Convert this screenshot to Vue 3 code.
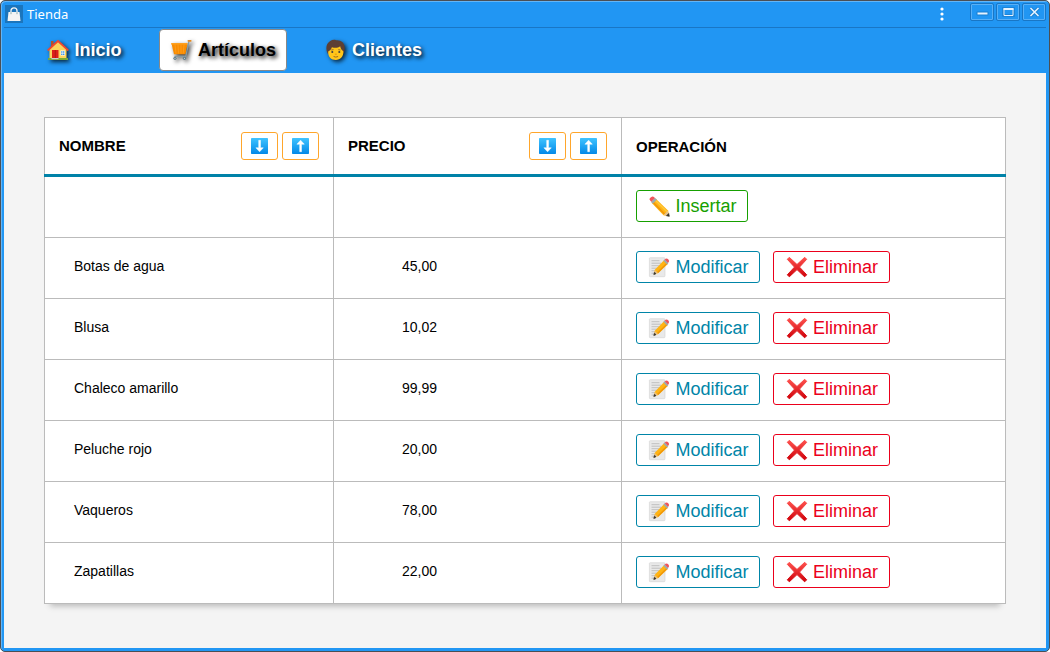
<script setup>
const articles = [
  { name: 'Botas de agua', price: '45,00' },
  { name: 'Blusa', price: '10,02' },
  { name: 'Chaleco amarillo', price: '99,99' },
  { name: 'Peluche rojo', price: '20,00' },
  { name: 'Vaqueros', price: '78,00' },
  { name: 'Zapatillas', price: '22,00' },
]
const columns = ['NOMBRE', 'PRECIO']
</script>

<template>
  <div class="desktop">
    <div class="window">
      <header class="titlebar">
        <span class="app-icon">
          <svg width="18" height="18" viewBox="0 0 18 18">
            <path d="M3.500 7h11l1 9h-13z" fill="#f4f4f4" />
            <path d="M6 9V5.800a3 3 0 0 1 6 0V9" fill="none" stroke="#f4f4f4" stroke-width="1.300" />
            <path d="M6 7.200v2M12 7.200v2" stroke="#8aa" stroke-width="1" />
          </svg>
        </span>
        <span class="title">Tienda</span>
        <svg class="dots" width="4" height="14" viewBox="0 0 4 14">
          <circle v-for="y in [2, 7, 12]" :key="y" cx="2" :cy="y" r="1.6" fill="#fff" />
        </svg>
        <div class="controls">
          <button>
            <svg width="13" height="10" viewBox="0 0 13 10"><rect x="0.500" y="4.500" width="12" height="4" rx="1" fill="#1b7fd0" /><rect x="1.500" y="5.500" width="10" height="2" fill="#e6f3ff" /></svg>
          </button>
          <button>
            <svg width="13" height="10" viewBox="0 0 13 10"><path d="M1.500 1.500h10v7h-10z" fill="none" stroke="#1b7fd0" stroke-width="2.600" /><path d="M2 1.500h9v7H2z" fill="none" stroke="#e6f3ff" /><path d="M1.500 2h10" stroke="#e6f3ff" stroke-width="2" /></svg>
          </button>
          <button>
            <svg width="13" height="10" viewBox="0 0 13 10"><path d="M2.500 1l8 8M10.500 1l-8 8" stroke="#1b7fd0" stroke-width="3.400" /><path d="M2.500 1l8 8M10.500 1l-8 8" stroke="#e6f3ff" stroke-width="1.600" /></svg>
          </button>
        </div>
      </header>

      <nav class="menu">
        <a class="item home">
          <svg width="22" height="22" viewBox="0 0 22 22">
            <path d="M4 2h2.500v5H4z" fill="#b5532a" />
            <path d="M2.500 10L11 2.500l8.500 7.500v10h-17z" fill="#fbd45d" />
            <path d="M1.200 11L11 2l9.800 9" fill="none" stroke="#f0482f" stroke-width="1.700" stroke-linecap="round" />
            <path d="M5 11h6.500v9H5z" fill="#dc1f1a" />
            <path d="M8.300 11v9" stroke="#9e1712" stroke-width=".7" />
            <path d="M13.500 11.500h4.500v5h-4.500z" fill="#fff" />
            <path d="M14.200 12.200h1.300v1.500h-1.300zM16.100 12.200h1.300v1.500h-1.300zM14.200 14.400h1.300v1.500h-1.300zM16.100 14.400h1.300v1.500h-1.300z" fill="#298be0" />
            <path d="M1 19h20v2H1z" fill="#78a936" />
            <path d="M4.500 19h7v1.200h-7z" fill="#c9cdd0" />
          </svg>
          <span>Inicio</span>
        </a>
        <a class="item active">
          <svg width="22" height="22" viewBox="0 0 22 22">
            <path d="M1.500 4.500h16l-2 10.800H4z" fill="#f98c00" />
            <path d="M1.200 4.800h16.300" stroke="#ffa01c" stroke-width="1.500" />
            <path d="M5 5.500l1 9M8 5.500l.5 9M11 5.500v9M14 5.500l-.8 9" stroke="#ffa62b" stroke-width=".6" />
            <path d="M19 2l-3.200 15.300H4.500" fill="none" stroke="#849aa4" stroke-width="1.300" />
            <path d="M18.400 1.800h2.300" stroke="#e88a1c" stroke-width="1.800" stroke-linecap="round" />
            <circle cx="5" cy="19.300" r="1.600" fill="#607d8b" /><circle cx="14.500" cy="19.300" r="1.600" fill="#607d8b" />
            <circle cx="5" cy="19.300" r=".6" fill="#cfd8dc" /><circle cx="14.500" cy="19.300" r=".6" fill="#cfd8dc" />
          </svg>
          <span>Artículos</span>
        </a>
        <a class="item people">
          <svg width="22" height="22" viewBox="0 0 22 22">
            <path d="M2.600 14.500C.4 10 1 4.500 5.200 2 7 .8 9.500.6 11 1.200c5-.6 8.900 2.800 8.700 7.800 0 2.200-.4 4-1.200 5.500z" fill="#5d3f34" />
            <path d="M3.200 12.500c1.600-.8 3-2.200 3.700-4.300 3.200 1.200 6.200.6 8.300-.9.300 2.200 1.500 3.900 3.100 5 .5 5-2.800 8.700-7.500 8.700s-8-3.500-7.600-8.500z" fill="#ffc61a" />
            <path d="M6.300 11l2.200-.3M13.300 10.700l2.200.3" stroke="#6d4c41" stroke-width=".8" />
            <circle cx="7.300" cy="13" r="1.050" fill="#404040" /><circle cx="14.300" cy="13" r="1.050" fill="#404040" />
            <path d="M9.800 15.200h2" stroke="#e59600" stroke-width="1" />
            <path d="M8.600 17.500q2.200 1.200 4.500 0" fill="none" stroke="#9a6a20" stroke-width="1" />
          </svg>
          <span>Clientes</span>
        </a>
      </nav>

      <main class="content">
        <div class="table">
          <div class="row head">
            <div v-for="c in columns" :key="c" class="cell heading" :class="c.toLowerCase()">
              <span>{{ c }}</span>
              <div class="sorts">
                <button v-for="dir in ['down', 'up']" :key="dir" class="sort">
                  <svg width="17" height="16" viewBox="0 0 17 16">
                    <defs>
                      <linearGradient :id="'sky-' + c + dir" x2="0" y2="1"><stop stop-color="#40c4ff" /><stop offset="1" stop-color="#0288e8" /></linearGradient>
                    </defs>
                    <rect width="17" height="16" rx=".7" :fill="`url(#sky-${c}${dir})`" />
                    <path v-if="dir === 'down'" d="M7.700 2.300h1.800v7.500h2.800L8.600 13.800 4.900 9.800h2.800z" fill="#fff" stroke="#fff" stroke-width=".5" stroke-linejoin="round" />
                    <path v-else d="M7.700 13.700h1.800V6.200h2.800L8.600 2.200 4.900 6.200h2.800z" fill="#fff" stroke="#fff" stroke-width=".5" stroke-linejoin="round" />
                  </svg>
                </button>
              </div>
            </div>
            <div class="cell heading operation"><span>OPERACIÓN</span></div>
          </div>

          <div class="row">
            <div class="cell nombre"></div>
            <div class="cell precio"></div>
            <div class="cell operation">
              <button class="action insert">
                <svg width="22" height="22" viewBox="0 0 22 22">
                  <path d="M7.600 3.600L20 15.600l1.200 5.600-5.700-1L3.500 7.800z" fill="#ffb414" />
                  <path d="M4.600 6.700L16.500 19" stroke="#f0960a" stroke-width="1.600" />
                  <path d="M6.800 4.700L19 16.700" stroke="#ffca3d" stroke-width="1.200" />
                  <path d="M1.600 4.700q-.4-1 .7-2t2.200-1.200q.8-.2 1.700.7l1 1-3.800 3.900z" fill="#f0555b" />
                  <path d="M7 2.900L3.100 7l1.700 1.700L8.900 4.600z" fill="#9baab0" />
                  <path d="M20 15.500l1.200 5.700-5.600-1.200z" fill="#e6c28c" />
                  <path d="M20.700 18.500l.6 2.800-2.800-.5z" fill="#333" stroke="#333" stroke-width=".7" />
                </svg>
                <span>Insertar</span>
              </button>
            </div>
          </div>

          <div v-for="a in articles" :key="a.name" class="row">
            <div class="cell nombre">{{ a.name }}</div>
            <div class="cell precio"><span>{{ a.price }}</span></div>
            <div class="cell operation">
              <button class="action modify">
                <svg width="22" height="22" viewBox="0 0 22 22">
                  <rect x="1.400" y="1.700" width="15.600" height="19" rx=".8" fill="#e9e9e9" stroke="#d2d2d2" stroke-width=".6" />
                  <path d="M3.500 4.700h8M3.500 7.200h9.500M3.500 9.700h8M3.500 12.200h6.500M3.500 14.700h4M3.500 17.200h3" stroke="#b4b4b4" stroke-width=".8" />
                  <path d="M16 4.200l3.800 3.700L10.300 17l-4.500 1.500 1-4.800z" fill="#ffb414" />
                  <path d="M18.800 7.600L9.600 16.600" stroke="#f0960a" stroke-width="1.400" />
                  <path d="M16.500 3.700l1.200-1q1.300-.7 2.500.5t.7 2.500l-1.100 1.500z" fill="#f0555b" />
                  <path d="M15.400 4.700l3.700 3.700 1.200-1.200-3.600-3.700z" fill="#9baab0" />
                  <path d="M7 14.200l-1.100 4.200 4-1.500z" fill="#e6c28c" />
                  <path d="M6.400 16.300l-.6 2.200 2.200-.8z" fill="#333" stroke="#333" stroke-width=".7" />
                </svg>
                <span>Modificar</span>
              </button>
              <button class="action remove">
                <svg width="22" height="22" viewBox="0 0 22 22">
                  <defs><linearGradient id="cross-red" gradientUnits="userSpaceOnUse" x1="0" y1="1" x2="0" y2="21"><stop stop-color="#ff5450" /><stop offset="1" stop-color="#cf0009" /></linearGradient></defs>
                  <path d="M3.300 1.300L11 8.500l7.700-7.200 2 2-7.200 7.800 7.200 7.700-2 2-7.700-7.200-7.700 7.200-2-2 7.200-7.700-7.200-7.800z" fill="url(#cross-red)" stroke="url(#cross-red)" stroke-width="1" stroke-linejoin="round" />
                </svg>
                <span>Eliminar</span>
              </button>
            </div>
          </div>
        </div>
      </main>
    </div>
  </div>
</template>

<style scoped>
* { box-sizing: border-box; }
button { margin: 0; padding: 0; background: transparent; font-family: inherit; }
svg { display: block; flex: none; }
.desktop {
  width: 1050px;
  height: 652px;
  background: #fff;
  font-family: "Liberation Sans", Arial, sans-serif;
}
.window {
  width: 1050px;
  height: 652px;
  border: 1px solid #4b4f54;
  border-radius: 5px;
  background: #2196f3;
  box-shadow: inset 1px 1px #64b5f6;
  padding: 0 3px 3px;
  overflow: hidden;
  display: flex;
  flex-direction: column;
}
.titlebar {
  height: 27px;
  flex: none;
  display: flex;
  align-items: flex-start;
  border-bottom: 1px solid #1976c5;
  padding: 2px 0 0 1px;
}
.app-icon { width: 18px; height: 18px; margin-top: 2px; background: #1b75bc; }
.title {
  margin-left: 4px;
  font: 13px/22px "Noto Sans", sans-serif;
  color: #fff;
  flex: 1;
}
.dots { margin: 4px 26px 0 0; }
.controls { display: flex; gap: 2px; }
.controls button {
  width: 24px;
  height: 18px;
  border: 1px solid #1976c5;
  border-radius: 2px;
  box-shadow: inset 0 0 0 1px #58b0f7;
  display: grid;
  place-items: center;
}
.menu {
  height: 45px;
  flex: none;
  display: flex;
  align-items: flex-start;
  padding: 1px 0 0 31px;
}
.item {
  height: 42px;
  border: 1px solid transparent;
  border-radius: 4px;
  padding: 0 10px;
  display: flex;
  align-items: center;
  gap: 5.600px;
  font-size: 18px;
  font-weight: bold;
  line-height: 40px;
  color: #fff;
  text-shadow: 2px 2px 4px #000;
}
.item svg { filter: drop-shadow(2px 2px 2px rgba(0, 0, 0, .75)); }
.home { width: 124px; padding-left: 11px; }
.active { width: 128px; gap: 6px; background: #fff; border-color: #888; color: #000; }
.people { width: 120px; margin-left: 27px; gap: 5px; }
.content { flex: 1; background: #f4f4f4; padding: 44px 40px; }
.table {
  width: 962px;
  background: #fff;
  border-top: 1px solid #bbb;
  box-shadow: 0 8px 6px -6px rgba(0, 0, 0, .25);
}
.row { height: 61px; display: flex; border-bottom: 1px solid #bbb; }
.head { height: 59px; border-bottom: 3px solid #0082a8; }
.cell {
  border-left: 1px solid #bbb;
  font-size: 14px;
  line-height: 16px;
  color: #000;
}
.nombre { width: 289px; padding: 20px 0 0 29px; }
.precio { width: 288px; padding: 20px 184px 0 0; text-align: right; }
.operation {
  width: 385px;
  border-right: 1px solid #bbb;
  padding: 13px 0 0 14px;
  display: flex;
  align-items: flex-start;
  gap: 13px;
}
.heading {
  padding: 0 14px;
  display: flex;
  align-items: center;
  justify-content: space-between;
  font-size: 15px;
  font-weight: bold;
}
.heading.operation { padding-top: 1px; }
.sorts { display: flex; gap: 4px; }
.sort {
  width: 37px;
  height: 28px;
  border: 1px solid #ffa62b;
  border-radius: 3px;
  display: grid;
  place-items: center;
}
.action {
  height: 32px;
  border: 1px solid currentColor;
  border-radius: 3px;
  padding-left: 11px;
  display: flex;
  align-items: center;
  gap: 5.500px;
  font-size: 18px;
  line-height: 30px;
}
.insert { width: 112px; color: #16a000; }
.modify { width: 124px; color: #0085a8; }
.remove { width: 117px; padding-left: 12px; gap: 5px; color: #eb001b; }
</style>

<style>
body { margin: 0; background: #fff; }
</style>
